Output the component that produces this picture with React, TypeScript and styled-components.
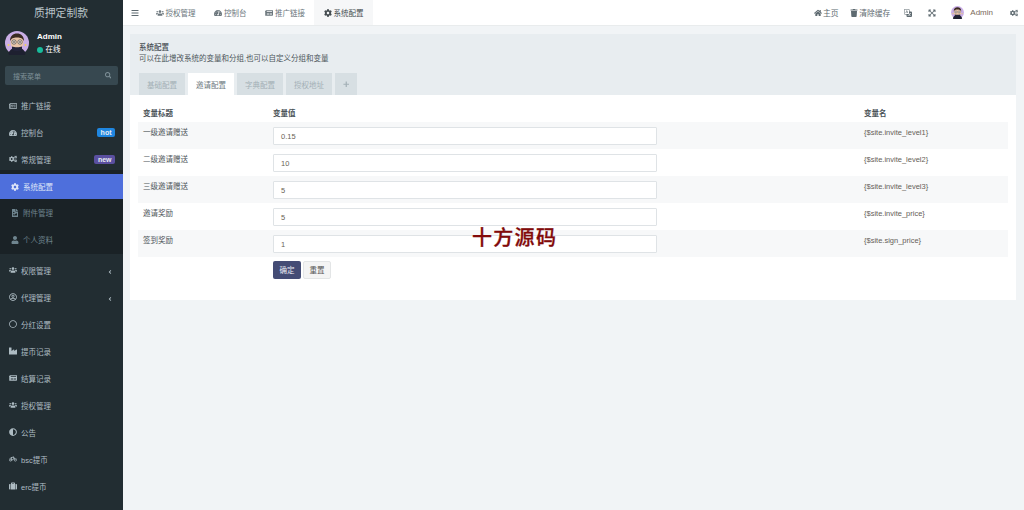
import React from "react";
import styled, { createGlobalStyle } from "styled-components";
import {
  FaBars, FaUsers, FaTachometerAlt, FaNewspaper, FaCog, FaHome, FaTrash, FaExpandArrowsAlt, FaCogs,
  FaSearch, FaFileImage, FaUser, FaAngleLeft, FaRegUserCircle, FaRegCircle, FaIndustry, FaAdjust, FaBicycle, FaSuitcase, FaPlus, FaRegNewspaper,
} from "react-icons/fa";
import { BsTranslate } from "react-icons/bs";

const Global = createGlobalStyle`
  html, body { margin: 0; padding: 0; width: 1024px; height: 510px; overflow: hidden; background: #f1f4f6; }
  * { box-sizing: border-box; }
  body { font-family: "Liberation Sans", "Noto Sans CJK SC", sans-serif; font-size: 7.5px; color: #444c50; }
`;

const Shell = styled.div`display: flex; width: 1024px; height: 510px; overflow: hidden;`;
const Sidebar = styled.aside`width: 123px; flex: none; background: #222d32; display: flex; flex-direction: column; color: #aebcc3;`;
const Logo = styled.div`height: 25px; display: flex; align-items: center; justify-content: center; font-size: 10.8px; color: #b9c4c9; padding: 0 1px 2px 0;`;
const UserPanel = styled.div`height: 41px; display: flex; align-items: flex-start; padding: 6px 0 0 5px; gap: 8px;`;
const UserText = styled.div`display: flex; flex-direction: column; gap: 4px; padding-top: 1px; font-size: 8px; color: #fff; line-height: 9px;`;
const UserName = styled.div`font-weight: 700;`;
const Online = styled.div`display: flex; align-items: center; gap: 2.5px; font-size: 7.5px;`;
const Dot = styled.span`width: 6px; height: 6px; border-radius: 50%; background: #18bc9c;`;
const SearchBox = styled.div`margin: 0 5px; height: 19px; background: #374850; border-radius: 2px; display: flex; align-items: center; justify-content: space-between; padding: 0 7px 0 8px; color: #7f9098; font-size: 7px;`;
const Menu = styled.nav`padding-top: 7px; display: flex; flex-direction: column;`;
const Item = styled.div<{ $active?: boolean; $sub?: boolean; $h?: number }>`
  height: ${(p) => p.$h ?? 27}px; display: flex; align-items: center; font-size: 7.5px;
  padding: ${(p) => (p.$h === 24 ? 2 : 0)}px 8px 0 ${(p) => (p.$sub ? 11 : 9)}px;
  background: ${(p) => (p.$active ? "#4e6fdc" : p.$sub ? "#1a2226" : "transparent")};
  color: ${(p) => (p.$active ? "#dfe5f8" : p.$sub ? "#6f858f" : "#aebcc3")};
`;
const ItemIcon = styled.span<{ $w?: number }>`width: ${(p) => p.$w ?? 12}px; display: inline-flex; align-items: center; font-size: 8px; flex: none;`;
const ItemLabel = styled.span`flex: 1; white-space: nowrap;`;
const Badge = styled.span<{ $c: string }>`background: ${(p) => p.$c}; color: #e8edf2; font-weight: 700; font-size: 7px; line-height: 9px; border-radius: 2px; padding: 0 3.5px; height: 9px; display: inline-flex; align-items: center;`;
const Chevron = styled.span`font-size: 6px; display: inline-flex; margin-right: 2px; margin-top: 4px;`;
const SubMenu = styled.div`display: flex; flex-direction: column; background: #1a2226; padding: 4px 0 1px; margin-bottom: 2.5px;`;

const Main = styled.main`flex: 1; display: flex; flex-direction: column; min-width: 0;`;
const Header = styled.header`height: 26px; background: #fff; border-bottom: 1px solid #e9eced; display: flex; align-items: stretch; justify-content: space-between; color: #5e6a70; font-size: 7.5px; flex: none;`;
const HeaderGroup = styled.div`display: flex; align-items: stretch;`;
const Burger = styled.span`width: 23px; display: flex; align-items: center; justify-content: center; font-size: 8px;`;
const HTab = styled.div<{ $active?: boolean }>`height: 25px; display: flex; align-items: center; gap: 1.5px; padding: 0 9px; background: ${(p) => (p.$active ? "#f6f7f8" : "transparent")}; color: ${(p) => (p.$active ? "#444c50" : "#6b767c")};`;
const HAction = styled.div<{ $pr?: number; $pl?: number }>`height: 25px; display: flex; align-items: center; gap: 0.5px; font-size: 7.8px; padding: 0 ${(p) => p.$pr ?? 8}px 0 ${(p) => p.$pl ?? 8}px;`;
const IconGlyph = styled.span`font-size: 8px; width: 9px; display: inline-flex; justify-content: center; flex: none;`;
const AdminName = styled.span`color: #7b6a5a; margin-left: 5.5px; font-size: 8px;`;

const Content = styled.div`flex: 1; padding: 8px 8px 0 7px; position: relative;`;
const Panel = styled.section`background: #fff; height: 266px; display: flex; flex-direction: column;`;
const PanelHead = styled.div`height: 61px; background: #e8edf0; padding: 9px 9px 0 9px; display: flex; flex-direction: column;`;
const HeadTitle = styled.div`font-size: 7.5px; line-height: 10px; font-weight: 500; color: #444c50;`;
const HeadDesc = styled.div`font-size: 7.5px; line-height: 10px; margin-top: 1px; color: #4c565b;`;
const Tabs = styled.div`display: flex; gap: 3px; margin-top: 9px; height: 22px;`;
const Tab = styled.div<{ $active?: boolean; $narrow?: boolean }>`
  width: ${(p) => (p.$narrow ? 22 : 46)}px; height: 22px; display: flex; align-items: center; justify-content: center; font-size: 7.5px;
  background: ${(p) => (p.$active ? "#fff" : "#d7dfe3")}; color: ${(p) => (p.$active ? "#6e7a80" : "#a3b0b6")};
`;
const PanelBody = styled.div`padding: 9px 8px 0 8px;`;
const Grid = styled.div`display: flex; flex-direction: column;`;
const Row = styled.div<{ $shade?: boolean; $h?: number }>`
  display: grid; grid-template-columns: 135px 591px 1fr; height: ${(p) => p.$h ?? 27}px;
  background: ${(p) => (p.$shade ? "#f7f8f9" : "transparent")};
`;
const HeadCell = styled.div<{ $first?: boolean }>`padding: 5px 0 0 ${(p) => (p.$first ? 5 : 0)}px; font-weight: 700; font-size: 7.5px; line-height: 10px; color: #4a5257;`;
const LabelCell = styled.div`padding: 6px 0 0 5px; font-size: 7.5px; line-height: 10px; color: #4e565a;`;
const ValueCell = styled.div`padding: 5px 0 0 0;`;
const NameCell = styled.div`padding: 6px 0 0 0; font-size: 7.5px; line-height: 10px; color: #666058;`;
const Input = styled.div`width: 384px; height: 18px; background: #fff; border: 1px solid #dfe3e6; border-radius: 1px; display: flex; align-items: center; padding-left: 7px; font-size: 7.5px; color: #6a5f55;`;
const Actions = styled.div`display: flex; gap: 2px; margin: 3.5px 0 0 135px;`;
const Primary = styled.div`width: 28px; height: 18px; background: #444c75; border-radius: 2px; color: #e8e9f2; font-size: 7.5px; display: flex; align-items: center; justify-content: center;`;
const Secondary = styled.div`width: 28px; height: 18px; background: #f4f4f4; border: 1px solid #e3e5e6; border-radius: 2px; color: #555; font-size: 7.5px; display: flex; align-items: center; justify-content: center;`;
const Watermark = styled.div`position: absolute; left: 349px; top: 198px; font-family: "Noto Sans CJK SC", sans-serif; font-weight: 500; -webkit-text-stroke: 0.3px #820a0a; font-size: 20px; line-height: 26px; letter-spacing: 1.3px; color: #820a0a; white-space: nowrap;`;

const Avatar = ({ size }: { size: number }) => (
  <svg width={size} height={size} viewBox="0 0 24 24" style={{ flex: "none" }}>
    <circle cx="12" cy="12" r="12" fill="#c9aee6" />
    <circle cx="3.5" cy="14" r="1" fill="#f2d25a" />
    <circle cx="20.5" cy="14" r="1" fill="#f2d25a" />
    <path d="M3.500 23c.5-4 4-6.500 8.500-6.500s8 2.500 8.500 6.500a12 12 0 0 1-17 0z" fill="#1e2030" />
    <ellipse cx="12" cy="11.500" rx="6.500" ry="7" fill="#e9c4a8" />
    <path d="M5 10c0-5 3-7.500 7-7.500s7 2.500 7 7.500c-1.500-2.500-3-3.500-7-3.500s-5.500 1-7 3.500z" fill="#3a2a22" />
    <circle cx="9" cy="11" r="2.200" fill="#f5e6da" stroke="#444" strokeWidth=".7" />
    <circle cx="15" cy="11" r="2.200" fill="#f5e6da" stroke="#444" strokeWidth=".7" />
    <circle cx="9" cy="11" r=".8" fill="#222" />
    <circle cx="15" cy="11" r=".8" fill="#222" />
    <path d="M7 15.500c2 1 8 1 10 0v3c-2 2-8 2-10 0z" fill="#23243a" />
  </svg>
);

type Nav = { icon: React.ReactNode; label: string; badge?: [string, string]; arrow?: boolean; h?: number };
const top: Nav[] = [
  { icon: <FaRegNewspaper />, label: "推广链接" },
  { icon: <FaTachometerAlt />, label: "控制台", badge: ["hot", "#1f86e0"] },
  { icon: <FaCogs />, label: "常规管理", badge: ["new", "#5a4fa0"], h: 24 },
];
const rest: Nav[] = [
  { icon: <FaUsers />, label: "权限管理", arrow: true },
  { icon: <FaRegUserCircle />, label: "代理管理", arrow: true },
  { icon: <FaRegCircle />, label: "分红设置" },
  { icon: <FaIndustry />, label: "提币记录" },
  { icon: <FaNewspaper />, label: "结算记录" },
  { icon: <FaUsers />, label: "授权管理" },
  { icon: <FaAdjust />, label: "公告" },
  { icon: <FaBicycle />, label: "bsc提币" },
  { icon: <FaSuitcase />, label: "erc提币" },
];
const rows = [
  ["一级邀请赠送", "0.15", "{$site.invite_level1}"],
  ["二级邀请赠送", "10", "{$site.invite_level2}"],
  ["三级邀请赠送", "5", "{$site.invite_level3}"],
  ["邀请奖励", "5", "{$site.invite_price}"],
  ["签到奖励", "1", "{$site.sign_price}"],
];

const NavRow = ({ n }: { n: Nav }) => (
  <Item $h={n.h}>
    <ItemIcon>{n.icon}</ItemIcon>
    <ItemLabel>{n.label}</ItemLabel>
    {n.badge && <Badge $c={n.badge[1]}>{n.badge[0]}</Badge>}
    {n.arrow && <Chevron><FaAngleLeft /></Chevron>}
  </Item>
);

export default function App() {
  return (
    <Shell>
      <Global />
      <Sidebar>
        <Logo>质押定制款</Logo>
        <UserPanel>
          <Avatar size={24} />
          <UserText>
            <UserName>Admin</UserName>
            <Online><Dot />在线</Online>
          </UserText>
        </UserPanel>
        <SearchBox>搜索菜单<FaSearch size={6.5} /></SearchBox>
        <Menu>
          {top.map((n) => <NavRow key={n.label} n={n} />)}
          <SubMenu>
            <Item $active $sub $h={25}><ItemIcon><FaCog /></ItemIcon><ItemLabel>系统配置</ItemLabel></Item>
            <Item $sub><ItemIcon><FaFileImage /></ItemIcon><ItemLabel>附件管理</ItemLabel></Item>
            <Item $sub><ItemIcon><FaUser /></ItemIcon><ItemLabel>个人资料</ItemLabel></Item>
          </SubMenu>
          {rest.map((n) => <NavRow key={n.label} n={n} />)}
        </Menu>
      </Sidebar>
      <Main>
        <Header>
          <HeaderGroup>
            <Burger><FaBars /></Burger>
            <HTab><IconGlyph><FaUsers /></IconGlyph>授权管理</HTab>
            <HTab><IconGlyph><FaTachometerAlt /></IconGlyph>控制台</HTab>
            <HTab><IconGlyph><FaNewspaper /></IconGlyph>推广链接</HTab>
            <HTab $active><IconGlyph><FaCog /></IconGlyph>系统配置</HTab>
          </HeaderGroup>
          <HeaderGroup>
            <HAction><IconGlyph><FaHome /></IconGlyph>主页</HAction>
            <HAction $pl={3} $pr={7.5}><IconGlyph><FaTrash /></IconGlyph>清除缓存</HAction>
            <HAction $pl={5.5}><IconGlyph><BsTranslate /></IconGlyph></HAction>
            <HAction $pl={7}><IconGlyph><FaExpandArrowsAlt /></IconGlyph></HAction>
            <HAction $pl={7}><Avatar size={13} /><AdminName>Admin</AdminName></HAction>
            <HAction $pr={6}><IconGlyph><FaCogs /></IconGlyph></HAction>
          </HeaderGroup>
        </Header>
        <Content>
          <Panel>
            <PanelHead>
              <HeadTitle>系统配置</HeadTitle>
              <HeadDesc>可以在此增改系统的变量和分组,也可以自定义分组和变量</HeadDesc>
              <Tabs>
                <Tab>基础配置</Tab>
                <Tab $active>邀请配置</Tab>
                <Tab>字典配置</Tab>
                <Tab>授权地址</Tab>
                <Tab $narrow><FaPlus size={6.5} /></Tab>
              </Tabs>
            </PanelHead>
            <PanelBody>
              <Grid>
                <Row $h={18}>
                  <HeadCell $first>变量标题</HeadCell>
                  <HeadCell>变量值</HeadCell>
                  <HeadCell>变量名</HeadCell>
                </Row>
                {rows.map((r, i) => (
                  <Row key={r[0]} $shade={i % 2 === 0}>
                    <LabelCell>{r[0]}</LabelCell>
                    <ValueCell><Input>{r[1]}</Input></ValueCell>
                    <NameCell>{r[2]}</NameCell>
                  </Row>
                ))}
              </Grid>
              <Actions>
                <Primary>确定</Primary>
                <Secondary>重置</Secondary>
              </Actions>
            </PanelBody>
          </Panel>
          <Watermark>十方源码</Watermark>
        </Content>
      </Main>
    </Shell>
  );
}
